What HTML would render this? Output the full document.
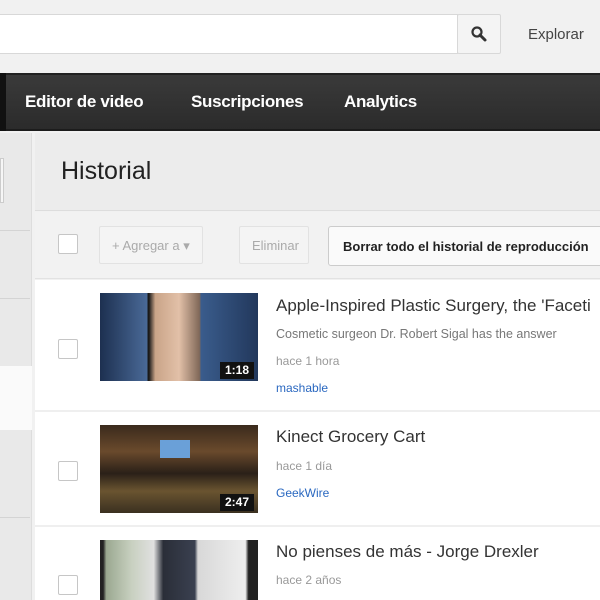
<!DOCTYPE html>
<html><head><meta charset="utf-8"><style>
*{margin:0;padding:0;box-sizing:border-box}
body{width:600px;height:600px;overflow:hidden;background:#f1f1f1;font-family:"Liberation Sans",Arial,sans-serif;position:relative}
.a{position:absolute}
</style></head><body>
<div class="a" style="left:0;top:0;width:600px;height:72px;background:#f1f1f1"></div>
<div class="a" style="left:-2px;top:14px;width:460px;height:40px;background:#fff;border:1px solid #d8d8d8"></div>
<div class="a" style="left:457px;top:14px;width:44px;height:40px;background:#f4f4f4;border:1px solid #d8d8d8;border-radius:2px"></div>
<svg class="a" style="left:470px;top:25px" width="18" height="18" viewBox="0 0 18 18"><circle cx="7" cy="7" r="4.5" fill="none" stroke="#333" stroke-width="2.2"/><path d="M10 10l5 5" stroke="#333" stroke-width="3" stroke-linecap="round"/></svg>
<div class="a" style="left:528px;top:26px;font-size:15px;color:#444">Explorar</div>
<div class="a" style="left:0;top:73px;width:600px;height:58px;background:linear-gradient(#3a3a3a,#2b2b2b);border-top:2px solid #222;border-bottom:2px solid #1c1c1c"></div>
<div class="a" style="left:0;top:73px;width:6px;height:58px;background:#111"></div>
<div class="a" style="left:25px;top:92px;font-size:17px;font-weight:bold;color:#fff;white-space:nowrap;letter-spacing:-0.3px">Editor de video</div>
<div class="a" style="left:191px;top:92px;font-size:17px;font-weight:bold;color:#fff;letter-spacing:-0.3px">Suscripciones</div>
<div class="a" style="left:344px;top:92px;font-size:17px;font-weight:bold;color:#fff;letter-spacing:-0.3px">Analytics</div>
<div class="a" style="left:0;top:133px;width:32px;height:467px;background:#e9e9e9;border-right:1px solid #ddd"></div>
<div class="a" style="left:0;top:158px;width:4px;height:45px;background:#f6f6f6;border:1px solid #ccc"></div>
<div class="a" style="left:0;top:230px;width:30px;height:1px;background:#d4d4d4"></div>
<div class="a" style="left:0;top:298px;width:30px;height:1px;background:#d4d4d4"></div>
<div class="a" style="left:0;top:366px;width:32px;height:64px;background:#fafafa"></div>
<div class="a" style="left:0;top:517px;width:30px;height:1px;background:#d4d4d4"></div>
<div class="a" style="left:35px;top:133px;width:565px;height:78px;background:#ececec;border-bottom:1px solid #ddd"></div>
<div class="a" style="left:61px;top:157px;font-size:25px;color:#222">Historial</div>
<div class="a" style="left:35px;top:212px;width:565px;height:67px;background:#f2f2f2;border-bottom:1px solid #e2e2e2"></div>
<div class="a" style="left:58px;top:234px;width:20px;height:20px;background:#fff;border:1px solid #c6c6c6;border-radius:2px"></div>
<div class="a" style="left:99px;top:226px;width:104px;height:38px;background:#f4f4f4;border:1px solid #e2e2e2;border-radius:2px;font-size:13px;color:#aaa;padding:11px 0 0 12px;white-space:nowrap">+ Agregar a ▾</div>
<div class="a" style="left:239px;top:226px;width:70px;height:38px;background:#f4f4f4;border:1px solid #e2e2e2;border-radius:2px;font-size:13px;color:#aaa;padding:11px 0 0 12px">Eliminar</div>
<div class="a" style="left:328px;top:226px;width:290px;height:40px;background:#fafafa;border:1px solid #ccc;border-radius:3px;font-size:13px;font-weight:bold;color:#222;padding:12px 0 0 14px;white-space:nowrap">Borrar todo el historial de reproducción</div>
<div class="a" style="left:35px;top:280px;width:565px;height:320px;background:#fff"></div>
<div class="a" style="left:35px;top:410px;width:565px;height:2px;background:#efefef"></div>
<div class="a" style="left:35px;top:525px;width:565px;height:2px;background:#efefef"></div>
<div class="a" style="left:58px;top:339px;width:20px;height:20px;border:1px solid #c6c6c6;border-radius:2px"></div>
<div class="a" style="left:58px;top:461px;width:20px;height:20px;border:1px solid #c6c6c6;border-radius:2px"></div>
<div class="a" style="left:58px;top:575px;width:20px;height:20px;border:1px solid #c6c6c6;border-radius:2px"></div>
<div class="a" style="left:100px;top:293px;width:158px;height:88px;background:linear-gradient(90deg,#1d3050,#4a6a98 30%,#1a1a1a 30%,#1a1a1a 31%,#c9a488 35%,#e2c0a8 50%,#806858 63%,#3a5c8c 64%,#22385c)"></div>
<div class="a" style="left:220px;top:362px;width:34px;height:17px;background:#111;color:#fff;font-size:12px;font-weight:bold;text-align:center;line-height:17px">1:18</div>
<div class="a" style="left:100px;top:425px;width:158px;height:88px;background:linear-gradient(180deg,#3a2a1c,#6a4a2c 30%,#2a2018 55%,#6a5430 75%,#3a3020)"></div>
<div class="a" style="left:160px;top:440px;width:30px;height:18px;background:#6aa0d8"></div>
<div class="a" style="left:220px;top:494px;width:34px;height:17px;background:#111;color:#fff;font-size:12px;font-weight:bold;text-align:center;line-height:17px">2:47</div>
<div class="a" style="left:100px;top:540px;width:158px;height:60px;background:linear-gradient(90deg,#222 2%,#9aa890 4%,#c8d0c0 20%,#e0e0e0 34%,#2a2e38 40%,#3a4050 60%,#d8d8d8 62%,#eee 92%,#222 94%)"></div>
<div class="a" style="left:276px;top:296px;font-size:17px;color:#333;white-space:nowrap">Apple-Inspired Plastic Surgery, the 'Faceti</div>
<div class="a" style="left:276px;top:327px;font-size:12.5px;color:#777;white-space:nowrap">Cosmetic surgeon Dr. Robert Sigal has the answer</div>
<div class="a" style="left:276px;top:354px;font-size:12px;color:#999">hace 1 hora</div>
<div class="a" style="left:276px;top:381px;font-size:12px;color:#2a68c0">mashable</div>
<div class="a" style="left:276px;top:427px;font-size:17px;color:#333">Kinect Grocery Cart</div>
<div class="a" style="left:276px;top:459px;font-size:12px;color:#999">hace 1 día</div>
<div class="a" style="left:276px;top:486px;font-size:12px;color:#2a68c0">GeekWire</div>
<div class="a" style="left:276px;top:542px;font-size:17px;color:#333;white-space:nowrap">No pienses de más - Jorge Drexler</div>
<div class="a" style="left:276px;top:573px;font-size:12px;color:#999">hace 2 años</div>
</body></html>
